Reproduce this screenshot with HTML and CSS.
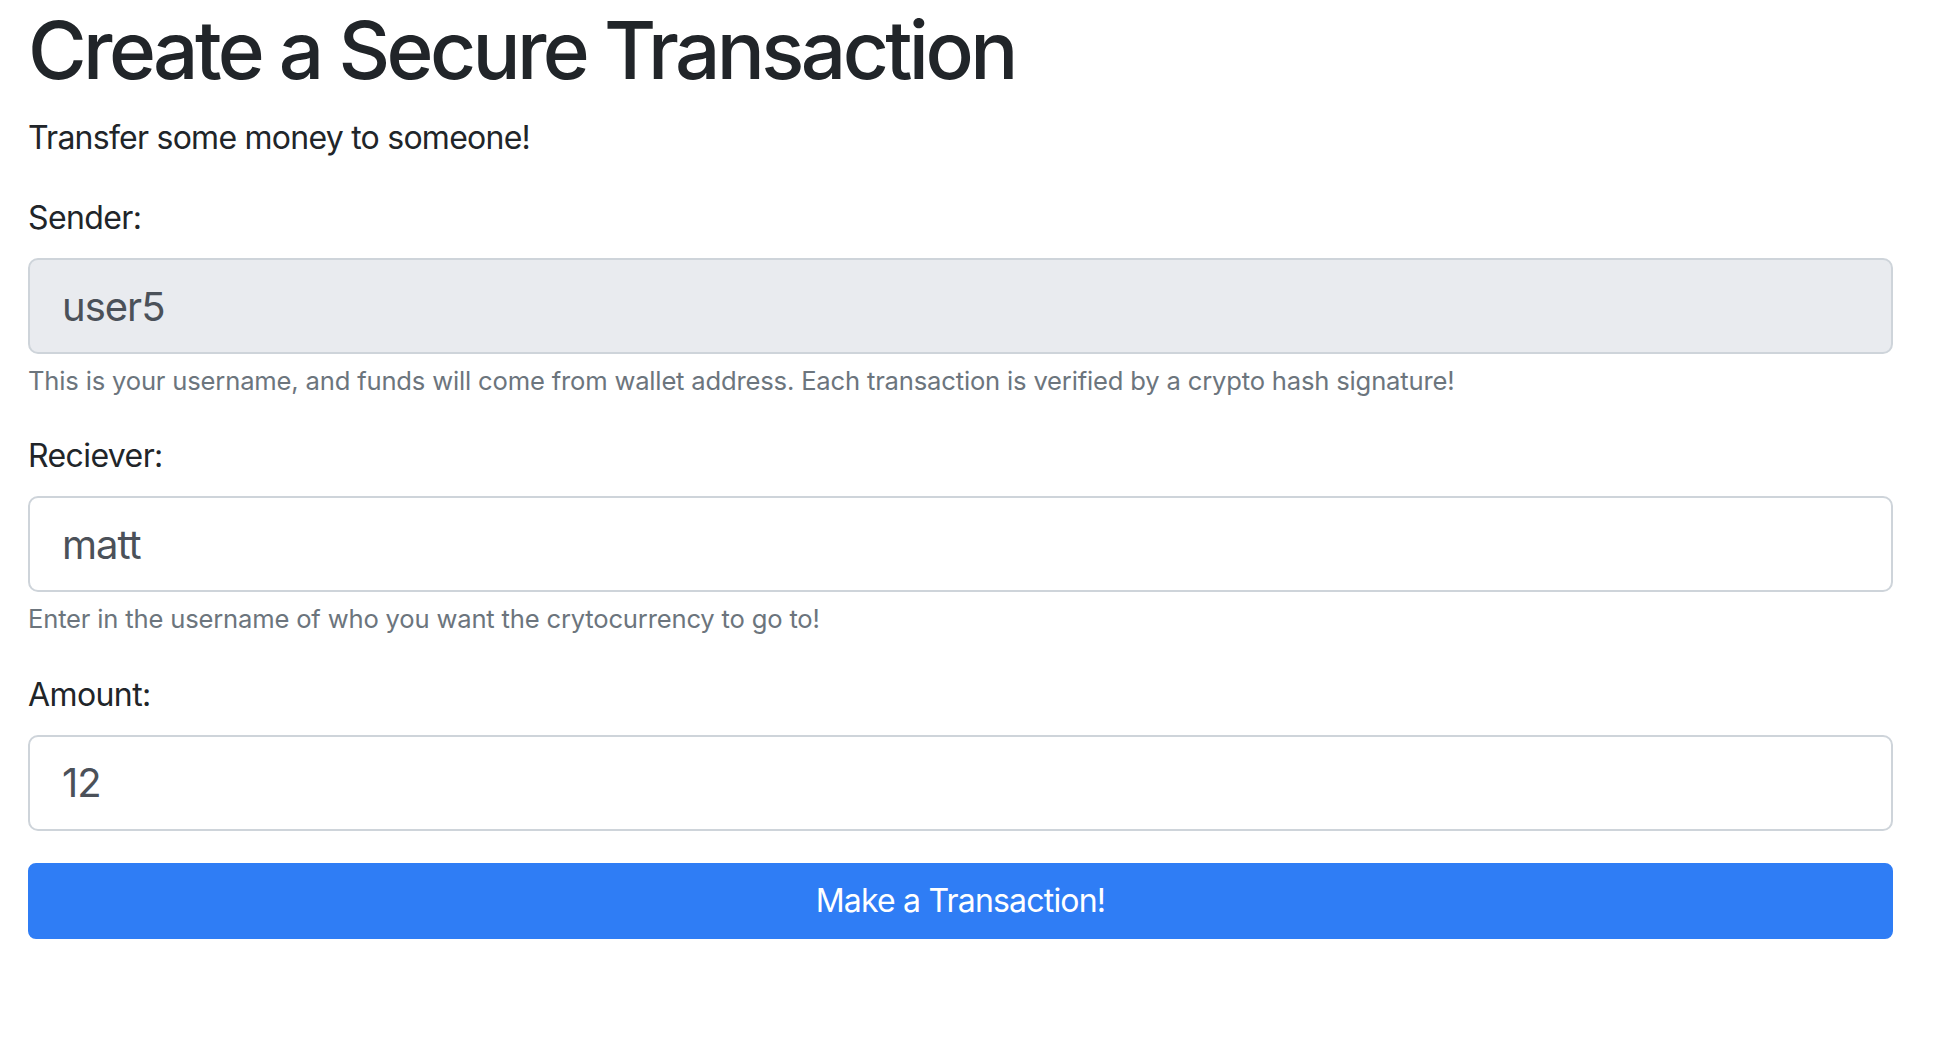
FILE: index.html
```html
<!DOCTYPE html>
<html lang="en">
<head>
<meta charset="utf-8">
<title>Create a Secure Transaction</title>
<link rel="stylesheet" href="styles.css">
</head>
<body>
<main class="page">
  <h1 class="title">Create a Secure Transaction</h1>
  <p class="lead">Transfer some money to someone!</p>
  <form class="tx-form">
    <div class="form-group">
      <label class="form-label" for="sender">Sender:</label>
      <input class="form-control is-readonly" id="sender" type="text" value="user5" readonly>
      <small class="form-text">This is your username, and funds will come from wallet address. Each transaction is verified by a crypto hash signature!</small>
    </div>
    <div class="form-group">
      <label class="form-label" for="receiver">Reciever:</label>
      <input class="form-control" id="receiver" type="text" value="matt">
      <small class="form-text">Enter in the username of who you want the crytocurrency to go to!</small>
    </div>
    <div class="form-group">
      <label class="form-label" for="amount">Amount:</label>
      <input class="form-control" id="amount" type="text" value="12">
    </div>
    <button class="btn-primary" type="button">Make a Transaction!</button>
  </form>
</main>
</body>
</html>
```
FILE: styles.css
```css
html, body {
  margin: 0;
  padding: 0;
  background: #ffffff;
}
body {
  font-family: Inter, "Noto Sans", "Liberation Sans", sans-serif;
  color: #212529;
}
.page {
  padding: 0 53px 0 28px;
}
.title {
  font-size: 80px;
  line-height: 96px;
  font-weight: 500;
  margin: 2px 0 16px;
  letter-spacing: -3.6px;
}
.lead {
  font-size: 32px;
  line-height: 48px;
  margin: 0 0 32px;
  letter-spacing: -0.75px;
}
.tx-form {
  display: flex;
  flex-direction: column;
}
.form-group {
  display: flex;
  flex-direction: column;
  margin-bottom: 32px;
}
.form-label {
  font-size: 32px;
  line-height: 48px;
  margin-bottom: 16px;
  letter-spacing: -0.6px;
}
.form-control {
  box-sizing: border-box;
  width: 100%;
  height: 96px;
  padding: 16px 32px;
  font-family: inherit;
  font-size: 40px;
  line-height: 60px;
  letter-spacing: -1px;
  color: #4b5159;
  background: #ffffff;
  border: 2px solid #ced4da;
  border-radius: 10px;
  outline: none;
}
.form-control.is-readonly {
  background: #e9ebef;
}
.form-text {
  margin-top: 8px;
  font-size: 25.6px;
  line-height: 38.4px;
  letter-spacing: -0.18px;
  color: #6c757d;
}
.btn-primary {
  box-sizing: border-box;
  width: 100%;
  height: 76px;
  padding: 12px 24px;
  font-family: inherit;
  font-size: 32px;
  line-height: 48px;
  letter-spacing: -0.8px;
  color: #ffffff;
  background: #2f7df5;
  border: 2px solid #2f7df5;
  border-radius: 8px;
}
```
